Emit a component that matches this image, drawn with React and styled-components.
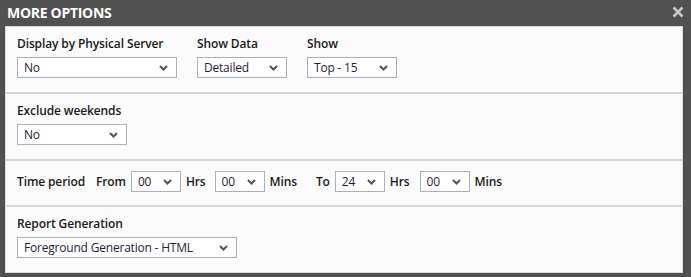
import React from "react";
import styled, { createGlobalStyle } from "styled-components";

const Global = createGlobalStyle`
  html, body {
    margin: 0;
    padding: 0;
    background: #515151;
  }
  body {
    font-family: "Open Sans", "DejaVu Sans", sans-serif;
  }
`;

function Chevron() {
  return (
    <svg width="9" height="6" viewBox="0 0 9 6">
      <path d="M1 1 L4.5 4.5 L8 1" fill="none" stroke="#555" strokeWidth="2" />
    </svg>
  );
}

function CloseIcon() {
  return (
    <svg width="12" height="12" viewBox="0 0 12 12">
      <path d="M1.5 1.5 L10.5 10.5 M10.5 1.5 L1.5 10.5" stroke="#c8c8c8" strokeWidth="2.6" />
    </svg>
  );
}

function Dropdown({ value, width }) {
  return (
    <SelectBox width={width}>
      <span>{value}</span>
      <Arrow>
        <Chevron />
      </Arrow>
    </SelectBox>
  );
}

export default function App() {
  return (
    <Dialog>
      <Global />
      <TitleBar>
        <Title>MORE OPTIONS</Title>
        <Close>
          <CloseIcon />
        </Close>
      </TitleBar>
      <Panel>
        <Section>
          <FieldRow>
            <Field>
              <Label>Display by Physical Server</Label>
              <Dropdown value="No" width={160} />
            </Field>
            <Field>
              <Label>Show Data</Label>
              <Dropdown value="Detailed" width={90} />
            </Field>
            <Field>
              <Label>Show</Label>
              <Dropdown value="Top - 15" width={90} />
            </Field>
          </FieldRow>
        </Section>
        <Section>
          <Field>
            <Label>Exclude weekends</Label>
            <Dropdown value="No" width={110} />
          </Field>
        </Section>
        <Section inline>
          <TimeRow>
            <Label trail={6}>Time period</Label>
            <Label>From</Label>
            <Dropdown value="00" width={50} />
            <Label trail={4}>Hrs</Label>
            <Dropdown value="00" width={50} />
            <Label trail={14}>Mins</Label>
            <Label>To</Label>
            <Dropdown value="24" width={50} />
            <Label trail={5}>Hrs</Label>
            <Dropdown value="00" width={50} />
            <Label>Mins</Label>
          </TimeRow>
        </Section>
        <Section last>
          <Field>
            <Label>Report Generation</Label>
            <Dropdown value="Foreground Generation - HTML" width={220} />
          </Field>
        </Section>
      </Panel>
    </Dialog>
  );
}

const Dialog = styled.div`
  width: 691px;
  min-height: 277px;
  background: #515151;
  display: flex;
  flex-direction: column;
  box-sizing: border-box;
  padding: 0 8px 7px 5px;
`;

const TitleBar = styled.div`
  flex-shrink: 0;
  height: 26px;
  display: flex;
  align-items: center;
  justify-content: space-between;
  padding: 0 0 2px 2px;
  box-sizing: border-box;
`;

const Title = styled.div`
  color: #fff;
  font-size: 14px;
  font-weight: 700;
  letter-spacing: -0.3px;
`;

const Close = styled.div`
  display: flex;
  margin-right: -1px;
`;

const Panel = styled.div`
  flex: 1;
  background: #fbfbfb;
  border: 1px solid #dcdcdc;
  display: flex;
  flex-direction: column;
`;

const Section = styled.div`
  padding: ${(p) => (p.inline ? "10px 11px 13px" : "8px 11px 14px")};
  border-bottom: ${(p) => (p.last ? "none" : "2px solid #d6d6d6")};
`;

const FieldRow = styled.div`
  display: flex;
  gap: 20px;
`;

const Field = styled.div`
  display: flex;
  flex-direction: column;
  gap: 5px;
`;

const Label = styled.div`
  font-size: 12px;
  line-height: 17px;
  font-weight: 600;
  letter-spacing: -0.12px;
  color: #1a1a1a;
  white-space: nowrap;
  margin-right: ${(p) => p.trail || 0}px;
`;

const TimeRow = styled.div`
  display: flex;
  align-items: center;
  gap: 5px;
`;

const SelectBox = styled.div`
  width: ${(p) => p.width}px;
  height: 21px;
  box-sizing: border-box;
  border: 1px solid #abafb8;
  background: #fff;
  display: flex;
  align-items: center;
  justify-content: space-between;
  padding: 0 8px 0 6px;
  font-size: 12px;
  letter-spacing: -0.2px;
  color: #2a1a3a;
  span {
    white-space: nowrap;
  }
`;

const Arrow = styled.div`
  display: flex;
`;
